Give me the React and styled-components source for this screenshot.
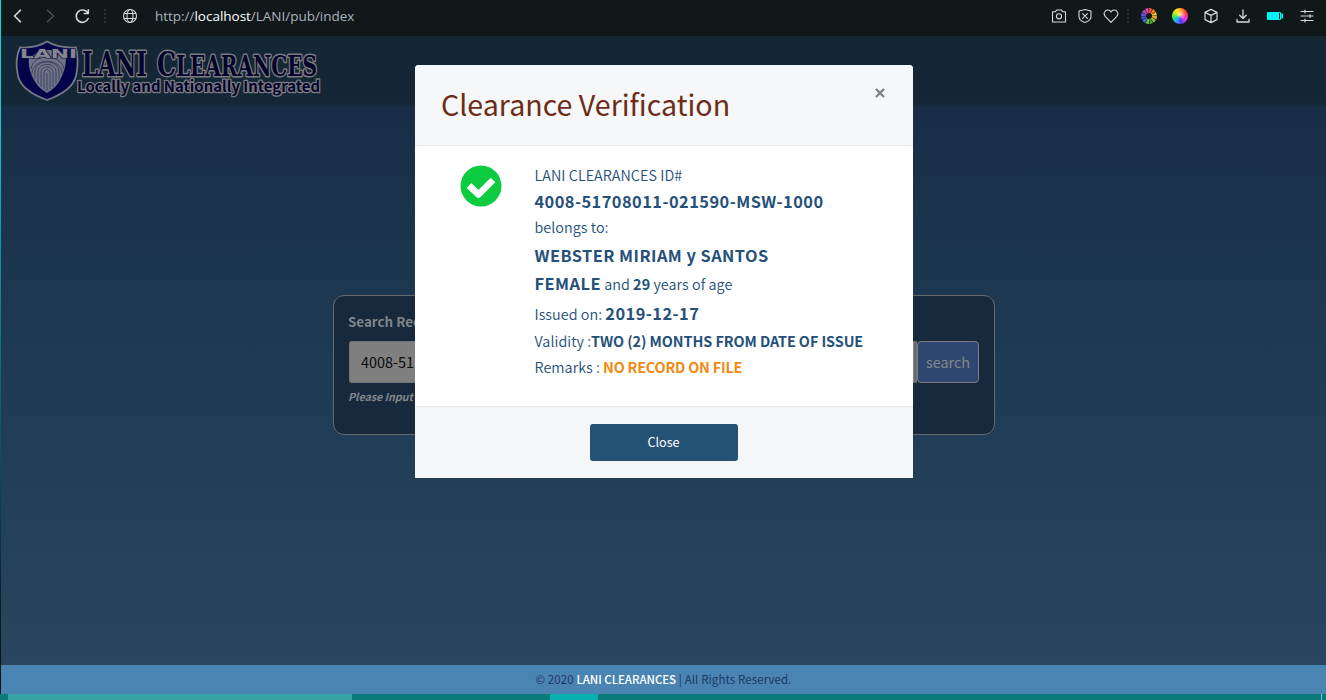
import React from "react";
import styled, { createGlobalStyle } from "styled-components";

const Global = createGlobalStyle`
  * { box-sizing: border-box; }
  html, body { margin: 0; padding: 0; background: #0a7b78; }
  body { font-family: "Noto Sans CJK SC", "Open Sans", sans-serif; overflow: hidden; }
`;

const Screen = styled.div`
  position: relative;
  display: flex;
  flex-direction: column;
  height: 700px;
  width: 100%;
  overflow: hidden;
`;

const Chrome = styled.div`
  display: flex;
  align-items: center;
  justify-content: space-between;
  flex: none;
  height: 36px;
  padding: 0 13px 4px 10px;
  background: #101819;
`;

const Group = styled.div`
  display: flex;
  align-items: center;
`;

const Icon = styled.svg`
  display: block;
  flex: none;
  width: 16px;
  height: 16px;
  margin-right: ${(p) => p.$gap || 0}px;
  fill: none;
  stroke: ${(p) => p.$color || "#d3d9da"};
  stroke-width: ${(p) => p.$weight || 1.2};
  stroke-linecap: round;
  stroke-linejoin: round;
`;

const Address = styled.div`
  font: 13.5px/20px "Open Sans", sans-serif;
  letter-spacing: -0.02px;
  color: #a9b4bb;
  white-space: nowrap;
  span { color: #fff; }
`;

const Site = styled.div`
  display: flex;
  flex-direction: column;
  flex: 1;
  background: linear-gradient(180deg, #162a40 0px, #182d45 70px, #1e3a52 300px, #28465f 630px);
`;

const SiteHeader = styled.header`
  flex: none;
  height: 70px;
  padding: 3px 0 0 14px;
  background: linear-gradient(#152635, #142737 95%, #162a3c);
`;

const Main = styled.main`
  flex: 1;
  display: flex;
  justify-content: center;
  align-items: flex-start;
  padding: 189px 0 0 2px;
`;

const SearchPanel = styled.section`
  width: 662px;
  height: 140px;
  padding: 14px 15px 0;
  border: 1px solid #66696d;
  border-radius: 11px;
  background: #16293d;
`;

const Label = styled.div`
  margin-left: -1px;
  font-size: 13.4px;
  font-weight: 700;
  line-height: 22px;
  color: #808589;
  white-space: nowrap;
`;

const InputGroup = styled.div`
  display: flex;
  height: 42px;
  margin-top: 9px;
`;

const Input = styled.div`
  flex: 1;
  padding-left: 11px;
  border: 1px solid #737373;
  border-right: 3px solid #6d6e6c;
  border-radius: 3px 0 0 3px;
  background: #7f7f7f;
  color: #0b0b0b;
  font-size: 14.4px;
  line-height: 39px;
`;

const SearchButton = styled.button`
  width: 62px;
  padding: 0 0 2px;
  border: 1px solid #7d7e80;
  border-radius: 4px;
  background: #2f4670;
  color: #84878a;
  font: 14.4px "Noto Sans CJK SC", sans-serif;
`;

const Hint = styled.div`
  margin: 4px 0 0 -1px;
  color: #808589;
  font-size: 10.8px;
  font-weight: 700;
  font-style: italic;
  letter-spacing: -0.1px;
  line-height: 18px;
`;

const SiteFooter = styled.footer`
  flex: none;
  height: 29px;
  padding-left: 1px;
  background: #4a84b2;
  color: #1b3966;
  font-size: 11.5px;
  line-height: 28px;
  letter-spacing: 0.1px;
  text-align: center;
  strong { font-weight: 500; letter-spacing: -0.05px; color: #fff; }
`;

const TaskBar = styled.div`
  display: flex;
  flex: none;
  height: 6px;
  padding-left: 8px;
  background: #0a7b78;
`;

const TaskItem = styled.span`
  width: ${(p) => p.$width}px;
  margin-right: ${(p) => p.$gap}px;
  background: ${(p) => p.$color};
`;

const WindowEdge = styled.div`
  position: absolute;
  left: 0;
  top: 0;
  width: 1px;
  height: 694px;
  background: linear-gradient(#00d9dc, #00d2d4 16%, #0a6a72 55%, #06131a 94%);
`;

const Overlay = styled.div`
  position: absolute;
  inset: 65px 0 0;
  display: flex;
  align-items: flex-start;
  justify-content: center;
  padding-left: 2px;
`;

const Dialog = styled.div`
  width: 498px;
  border-radius: 4px 4px 0 0;
  overflow: hidden;
  background: #fff;
`;

const DialogHeader = styled.div`
  display: flex;
  justify-content: space-between;
  height: 81px;
  padding: 19px 27px 0 26px;
  border-bottom: 1px solid #e7e9ea;
  background: #f6f7f9;
`;

const Title = styled.h1`
  margin: 0;
  color: #6d2b15;
  font-size: 28.6px;
  font-weight: 400;
  line-height: 40px;
`;

const CloseMark = styled.svg`
  display: block;
  width: 12px;
  height: 12px;
  margin-top: 3px;
`;

const DialogBody = styled.div`
  display: flex;
  height: 260px;
  padding: 17px 0 0 45px;
  color: #24507a;
`;

const Details = styled.div`
  margin-left: 32.5px;
`;

const Line = styled.div`
  height: 24px;
  margin-bottom: ${(p) => p.$gap || 0}px;
  font-size: 14.4px;
  font-weight: 350;
  line-height: 24px;
  letter-spacing: 0.03px;
  white-space: nowrap;
`;

const Strong = styled.strong`
  font-size: ${(p) => (p.$large ? 16.4 : 14.4)}px;
  font-weight: 700;
  line-height: 0;
  letter-spacing: ${(p) => p.$spacing ?? (p.$large ? 0.45 : 0.1)}px;
  color: ${(p) => p.$color || "inherit"};
`;

const DialogFooter = styled.div`
  display: flex;
  justify-content: center;
  height: 72px;
  padding-top: 17px;
  border-top: 1px solid #e7e9ea;
  background: #f5f6f8;
`;

const CloseButton = styled.button`
  width: 148px;
  height: 37px;
  padding: 0 1px 2px 0;
  border: 0;
  border-radius: 3px;
  background: #245275;
  color: #fff;
  font: 12.6px "Noto Sans CJK SC", sans-serif;
`;

const LogoArt = styled.svg`
  display: block;
  width: 310px;
  height: 64px;
  overflow: visible;
  .word { fill: #03032c; stroke: #7a7c80; stroke-linejoin: round; paint-order: stroke; }
  .serif { font-family: "DejaVu Serif Condensed", "DejaVu Serif", serif; font-weight: 700; stroke-width: 3px; }
  .sans { font-family: "Noto Sans CJK SC", sans-serif; font-weight: 700; stroke-width: 2.6px; }
  .crest { font-family: "DejaVu Sans", sans-serif; font-weight: 700; fill: #85888e; stroke: #15194a; stroke-width: 1.2px; paint-order: stroke; }
`;

function Logo() {
  return (
    <LogoArt viewBox="14 39 310 64">
      <path d="M47 41.500C40 46 30 48 20 47.500C16 56 16 67 18 76C21 88 33 95 47 100C61 95 73 88 76 76C78 67 78 56 76 47.500C66 48 55 46 47 41.500Z" fill="#02034a" stroke="#747983" strokeWidth="1.800" strokeLinejoin="round" />
      <path d="M29 58 41 50H54L66 58C66 65 64 73 60 80C57 86 52 90 47 93C42 90 37 86 34 80C30 73 28 65 29 58Z" fill="#6e7385" />
      <path d="M31 69C33 53 61 53 64 69M32 74C32 57 62 57 62 74M35 79V71C36 59 58 59 59 71V79M38 84V72C38 62 56 62 56 72V84M41 87V73C41 65 53 65 53 73V87M44 89V74C44 68 50 68 50 74V89M47 73V91" fill="none" stroke="#343a60" strokeWidth="0.800" />
      <text className="crest" x="20" y="58" fontSize="12.500" textLength="57" lengthAdjust="spacingAndGlyphs">LANI</text>
      <text className="word serif" y="76" fontSize="34">
        <tspan x="82" textLength="65" lengthAdjust="spacingAndGlyphs">LANI</tspan>
        <tspan x="157" textLength="19" lengthAdjust="spacingAndGlyphs">C</tspan>
        <tspan x="176" fontSize="27.500" textLength="141" lengthAdjust="spacingAndGlyphs">LEARANCES</tspan>
      </text>
      <text className="word sans" x="77" y="92" fontSize="15" textLength="243" lengthAdjust="spacingAndGlyphs">Locally and Nationally Integrated</text>
    </LogoArt>
  );
}

const WHEEL = ["#e8473b", "#f07c28", "#f5b92b", "#e8a626", "#8fbf3a", "#4a9a36", "#6abf40", "#4a6ad8", "#3f51d0", "#6b4bd0", "#b04bc4", "#d94a9a"];

const Segment = styled.circle`
  stroke-width: 5px;
  stroke-linecap: butt;
  stroke-dasharray: 2.5 50;
`;

function SegmentWheel() {
  return (
    <Icon viewBox="0 0 16 16" $gap={15}>
      {WHEEL.map((color, i) => (
        <Segment key={color} cx="8" cy="8" r="5.500" stroke={color} transform={`rotate(${i * 30 - 90} 8 8)`} />
      ))}
    </Icon>
  );
}

const Ball = styled.span`
  width: 16px;
  height: 16px;
  margin-right: 15px;
  border-radius: 50%;
  background:
    radial-gradient(circle at 58% 40%, #fffc 0, #fff6 14%, #fff0 36%),
    conic-gradient(#ffb020, #ff3a35 50deg, #ff2c7a 85deg, #e33bea 120deg, #5a35f5 170deg, #20a8ff 215deg, #1fe080 250deg, #a0f020 290deg, #ffe620 330deg, #ffb020);
`;

const Dots = styled.span`
  width: 2px;
  height: 14px;
  margin-right: ${(p) => p.$gap}px;
  background: repeating-linear-gradient(#2b3332 0 2px, transparent 2px 4px);
`;

function BrowserBar() {
  return (
    <Chrome>
      <Group>
        <Icon viewBox="0 0 16 16" $gap={16} $weight={1.6}><path d="M10.500 2.200 4.500 8l6 5.800" /></Icon>
        <Icon viewBox="0 0 16 16" $gap={16} $weight={1.4} $color="#4b5353"><path d="m5.500 2.200 6 5.800-6 5.800" /></Icon>
        <Icon viewBox="0 0 16 16" $gap={14} $weight={1.6}><path d="M14.200 10.500A6.200 6.200 0 1 1 13.800 5M14.300 1.700V5.500H10.300" /></Icon>
        <Dots $gap={16} />
        <Icon viewBox="0 0 16 16" $gap={17} $weight={1.1}><circle cx="8" cy="8" r="6.500" /><ellipse cx="8" cy="8" rx="3" ry="6.500" /><path d="M2.200 5.500h11.600M2.200 10.500h11.600" /></Icon>
        <Address>http://<span>localhost</span>/LANI/pub/index</Address>
      </Group>
      <Group>
        <Icon viewBox="0 0 16 16" $gap={10} $weight={1.1}><path d="M1.500 3.800h3l1-1.800h5l1 1.800h3v10.200h-13z" /><circle cx="8" cy="8.300" r="2.600" /></Icon>
        <Icon viewBox="0 0 16 16" $gap={10} $weight={1.1}><path d="M8 1.500 14 3v5.500c0 3-3 5-6 6-3-1-6-3-6-6V3zM5.600 5.600l4.800 4.800M10.400 5.600l-4.800 4.800" /></Icon>
        <Icon viewBox="0 0 16 16" $gap={8} $weight={1.1}><path d="M8 14.300 2.400 8.600C-.4 5.500 2 2 4.800 2 6.500 2 7.500 3 8 4c.5-1 1.500-2 3.200-2 2.800 0 5.200 3.500 2.400 6.600z" /></Icon>
        <Dots $gap={12} />
        <SegmentWheel />
        <Ball />
        <Icon viewBox="0 0 16 16" $gap={16} $weight={1.2}><path d="m8 1.400 6 3v7.200l-6 3-6-3V4.400zM2 4.400l6 3 6-3M8 7.400v7.200" /></Icon>
        <Icon viewBox="0 0 16 16" $gap={16} $weight={1.3}><path d="M8 2v8.500M4.700 7.300 8 10.500l3.300-3.200M2 11.500V14h12v-2.500" /></Icon>
        <Icon viewBox="0 0 16 16" $gap={16} $color="none"><rect x="0" y="4" width="14" height="8" rx="1" fill="#00f4f6" /><path d="M14.300 5.500h1.700v5h-1.700z" fill="#00f4f6" /><path d="M12 5h1v6h-1z" fill="#101819" /></Icon>
        <Icon viewBox="0 0 16 16" $gap={-2} $weight={1.2}><path d="M2 3.500h12M2 8h12M2 12.500h12M6 2v3M11 6.500v3M6 11v3" /></Icon>
      </Group>
    </Chrome>
  );
}

export default function App() {
  return (
    <Screen>
      <Global />
      <BrowserBar />
      <Site>
        <SiteHeader><Logo /></SiteHeader>
        <Main>
          <SearchPanel>
            <Label>Search Rec</Label>
            <InputGroup>
              <Input>4008-51</Input>
              <SearchButton>search</SearchButton>
            </InputGroup>
            <Hint>Please Input</Hint>
          </SearchPanel>
        </Main>
      </Site>
      <SiteFooter>© 2020 <strong>LANI CLEARANCES</strong> | All Rights Reserved.</SiteFooter>
      <TaskBar>
        <TaskItem $width={344} $gap={198} $color="#36a5a3" />
        <TaskItem $width={48} $gap={723} $color="#08b0ae" />
        <TaskItem $width={1} $gap={0} $color="#7fc4c0" />
      </TaskBar>
      <WindowEdge />
      <Overlay>
        <Dialog>
          <DialogHeader>
            <Title>Clearance Verification</Title>
            <CloseMark viewBox="0 0 12 12">
              <path d="m2 2 8 8M10 2l-8 8" stroke="#7d7f80" strokeWidth="2.300" />
            </CloseMark>
          </DialogHeader>
          <DialogBody>
            <svg width="42" height="46" viewBox="0 0 42 46">
              <circle cx="21" cy="23" r="20.500" fill="#0bcb3f" />
              <path d="m9 22.500 9.500 9L33 17" fill="none" stroke="#fff" strokeWidth="6.600" strokeLinejoin="round" />
            </svg>
            <Details>
              <Line $gap={3}>LANI CLEARANCES ID#</Line>
              <Line $gap={1}><Strong $large>4008-51708011-021590-MSW-1000</Strong></Line>
              <Line $gap={5}>belongs to:</Line>
              <Line $gap={4}><Strong $large>WEBSTER MIRIAM y SANTOS</Strong></Line>
              <Line $gap={6}><Strong $large>FEMALE</Strong> and <Strong>29</Strong> years of age</Line>
              <Line $gap={3}>Issued on: <Strong $large>2019-12-17</Strong></Line>
              <Line $gap={2}>Validity :<Strong $spacing={-0.07}>TWO (2) MONTHS FROM DATE OF ISSUE</Strong></Line>
              <Line>Remarks : <Strong $spacing={-0.2} $color="#f08a12">NO RECORD ON FILE</Strong></Line>
            </Details>
          </DialogBody>
          <DialogFooter><CloseButton>Close</CloseButton></DialogFooter>
        </Dialog>
      </Overlay>
    </Screen>
  );
}
